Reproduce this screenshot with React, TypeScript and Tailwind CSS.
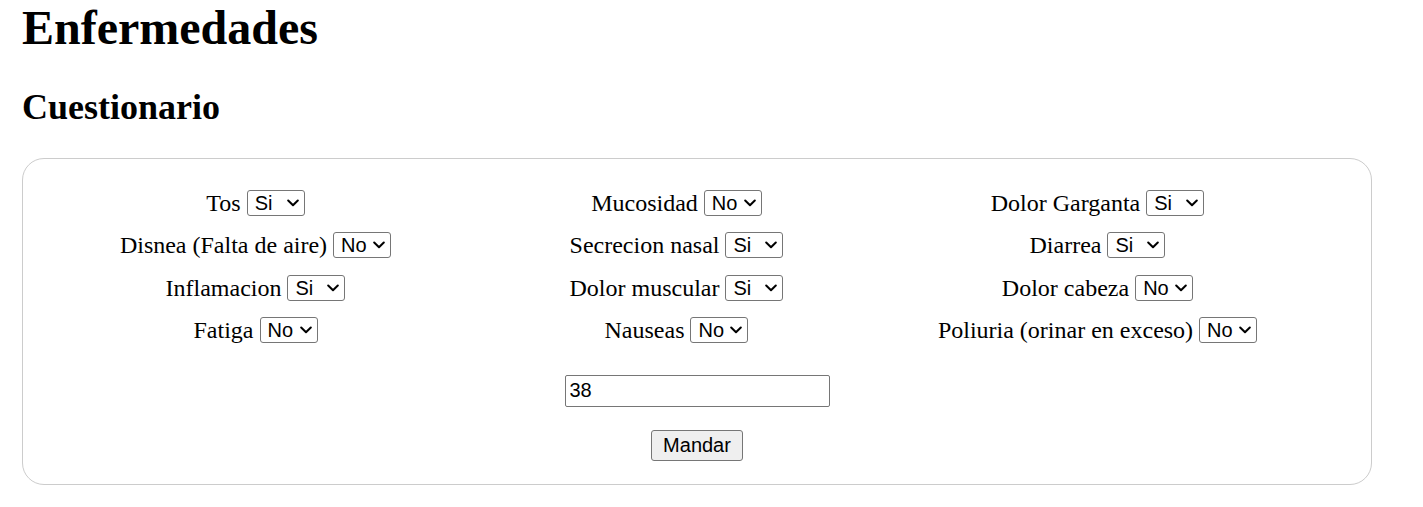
import React from "react";

const items: [string, string][] = [
  ["Tos", "Si"],
  ["Mucosidad", "No"],
  ["Dolor Garganta", "Si"],
  ["Disnea (Falta de aire)", "No"],
  ["Secrecion nasal", "Si"],
  ["Diarrea", "Si"],
  ["Inflamacion", "Si"],
  ["Dolor muscular", "Si"],
  ["Dolor cabeza", "No"],
  ["Fatiga", "No"],
  ["Nauseas", "No"],
  ["Poliuria (orinar en exceso)", "No"],
];

function Sel({ value }: { value: string }) {
  return (
    <span className="relative inline-block h-[26px]">
      <select
        defaultValue={value}
        className="appearance-none block w-[58px] h-[26px] border border-[#767676] rounded-[3px] bg-white pl-[7px] pr-[18px] text-[20px] leading-[24px] text-black font-['Liberation_Sans',Arial,sans-serif] outline-none"
      >
        <option value="Si">Si</option>
        <option value="No">No</option>
      </select>
      <svg
        className="absolute right-[6px] top-[9px] w-[12px] h-[8px] pointer-events-none"
        viewBox="0 0 12 8"
        fill="none"
      >
        <path d="M1.2 1.5l4.8 4.8 4.8-4.8" stroke="#000" strokeWidth="2" strokeLinecap="round" strokeLinejoin="round" />
      </svg>
    </span>
  );
}

export default function App() {
  return (
    <div className="px-[22px] font-['Liberation_Serif','Times_New_Roman',serif] text-black bg-white min-h-[507px]">
      <h1 className="text-[48px] font-bold leading-[55px] mb-[32px]">Enfermedades</h1>
      <h2 className="text-[36px] font-bold leading-[41px] mb-[30px]">Cuestionario</h2>
      <div className="border border-[#cccccc] rounded-[22px] pt-[23px] pb-[23px] w-[1350px]">
        <div className="grid grid-cols-3 w-[1263px] ml-[22px]">
          {items.map(([label, v]) => (
            <div key={label} className="h-[42.33px] flex items-center justify-center gap-[6px] text-[24px] leading-[28px]">
              <span>{label}</span>
              <Sel value={v} />
            </div>
          ))}
        </div>
        <div className="flex flex-col items-center mt-[23.7px] gap-[23px]">
          <input
            type="text"
            defaultValue="38"
            className="w-[265px] h-[32px] border border-[#767676] rounded-[2px] pl-[4px] pb-[2px] text-[20px] text-black font-['Liberation_Sans',Arial,sans-serif] outline-none"
          />
          <button className="w-[92px] h-[31px] bg-[#efefef] border border-[#767676] rounded-[3px] pb-[2px] text-[20px] leading-[24px] text-black font-['Liberation_Sans',Arial,sans-serif]">
            Mandar
          </button>
        </div>
      </div>
    </div>
  );
}
